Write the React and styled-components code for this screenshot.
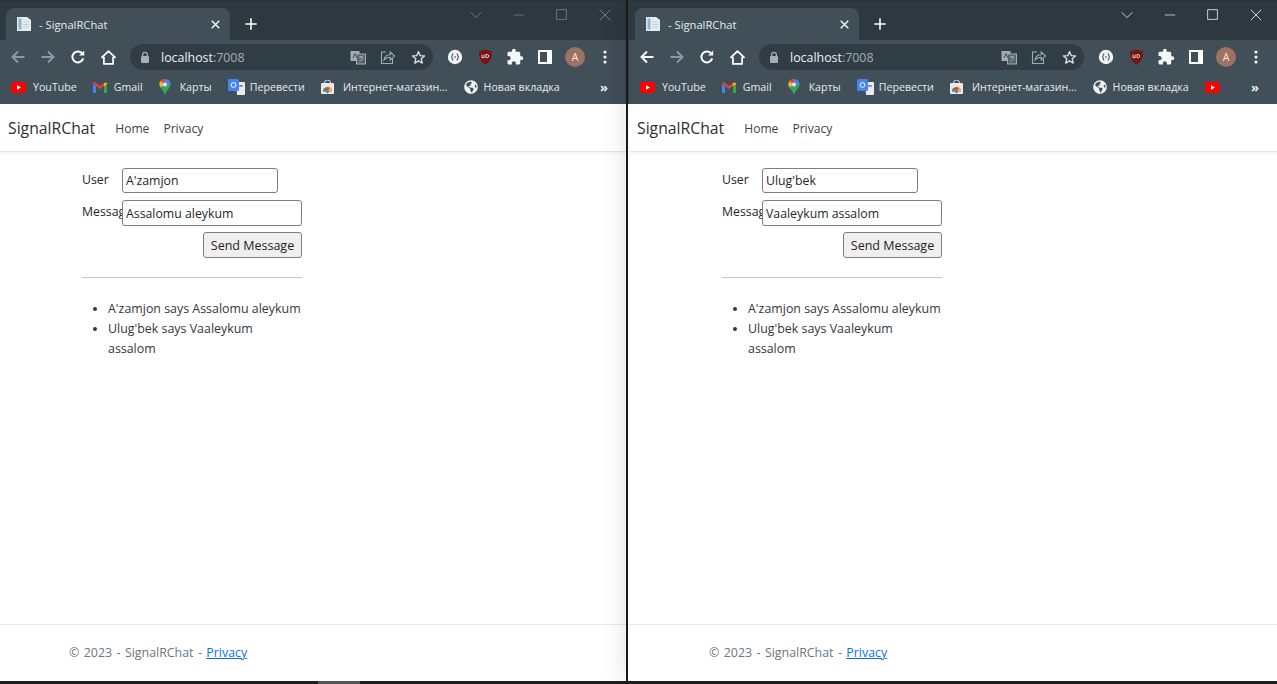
import React from "react";
import styled, { createGlobalStyle } from "styled-components";
import { FaGlobeAmericas } from "react-icons/fa";
import { MdExtension } from "react-icons/md";

const Global = createGlobalStyle`
  html, body { margin: 0; padding: 0; background: #211d1f; overflow: hidden; }
  * { box-sizing: border-box; }
`;

const Screen = styled.div`
  width: 1277px;
  height: 684px;
  display: flex;
  flex-direction: column;
  background: #211d1f;
`;
const Windows = styled.div`
  height: 681px;
  display: flex;
`;
const BottomStrip = styled.div`
  flex: 1;
  padding-left: 318px;
`;
const TaskbarPatch = styled.div`
  width: 42px;
  height: 3px;
  background: #55524f;
`;
const Divider = styled.div`
  width: 2px;
  background: #1c1719;
  position: relative;
  z-index: 2;
`;
const Win = styled.div`
  flex: 0 0 ${(p) => p.$width}px;
  width: ${(p) => p.$width}px;
  display: flex;
  flex-direction: column;
  background: #fff;
  padding-left: ${(p) => p.$inset}px;
  position: relative;
  z-index: ${(p) => (p.$active ? 1 : 0)};
  box-shadow: ${(p) => (p.$active ? "-10px 0 18px rgba(0,0,0,.07)" : "none")};
`;
const ChromeFrame = styled.div`
  background: #2e3a40;
  margin-left: ${(p) => -p.$inset}px;
  padding-left: ${(p) => p.$inset}px;
`;
const TabStrip = styled.div`
  height: 40px;
  display: flex;
  padding-left: 6px;
  background: #2d393f;
  border-top: 1px solid #283338;
`;
const Tab = styled.div`
  margin-top: 7px;
  width: 224px;
  height: 32px;
  background: #414f59;
  border-radius: 8px 8px 0 0;
  display: flex;
  align-items: center;
  padding: 0 8px 0 10px;
  color: #e6eaec;
  font: 11.2px "Open Sans", "Liberation Sans", sans-serif;
`;
const TabTitle = styled.span`
  flex: 1;
  margin-left: 7px;
  white-space: nowrap;
`;
const TabClose = styled.span`
  width: 16px;
  height: 16px;
  display: flex;
  align-items: center;
  justify-content: center;
  margin-right: -1px;
`;
const NewTab = styled.div`
  width: 42px;
  margin-top: 7px;
  height: 32px;
  display: flex;
  align-items: center;
  justify-content: center;
`;
const WinControls = styled.div`
  margin-left: auto;
  display: flex;
  height: 27px;
`;
const ControlSlot = styled.div`
  width: 43px;
  display: flex;
  align-items: center;
  justify-content: center;
`;
const Toolbar = styled.div`
  height: 34px;
  background: #414f59;
  display: flex;
  align-items: center;
  padding: 0 6px 0 3px;
`;
const Slot = styled.div`
  width: 30px;
  height: 26px;
  display: flex;
  align-items: center;
  justify-content: center;
  flex: none;
`;
const Omnibox = styled.div`
  flex: 1;
  height: 26px;
  margin: 0 7px;
  border-radius: 13px;
  background: #303d45;
  display: flex;
  align-items: center;
  padding-left: 9px;
  font: 12.4px "Open Sans", "Liberation Sans", sans-serif;
`;
const Host = styled.span`
  margin-left: 10px;
  color: #eef1f2;
  flex: 1;
`;
const Port = styled.span`
  color: #a5adb2;
`;
const Avatar = styled.div`
  width: 20px;
  height: 20px;
  border-radius: 50%;
  background: #9c7262;
  color: #f3e9e4;
  font: 10.5px "Open Sans", sans-serif;
  display: flex;
  align-items: center;
  justify-content: center;
`;
const BookmarkBar = styled.div`
  height: 30px;
  background: #414f59;
  display: flex;
  align-items: center;
  padding: 0 18px 4px 11px;
  gap: 16px;
  color: #e6eaec;
  font: 10.65px "Open Sans", "Liberation Sans", sans-serif;
`;
const Bookmark = styled.div`
  display: flex;
  align-items: center;
  gap: ${(p) => p.$gap ?? 7}px;
  white-space: nowrap;
`;
const More = styled.div`
  margin-left: auto;
  color: #e8ecee;
  font-size: 13px;
  line-height: 14px;
  font-weight: 700;
`;
const Page = styled.div`
  flex: 1;
  display: flex;
  flex-direction: column;
  background: #fff;
  font: 12.3px/19.8px "Open Sans", "Liberation Sans", sans-serif;
  color: #212529;
`;
const Nav = styled.nav`
  height: 48px;
  flex: none;
  display: flex;
  align-items: center;
  padding: 2px 0 0 8px;
  border-bottom: 1px solid #e5e5e5;
  box-shadow: 0 2px 3px rgba(0, 0, 0, 0.05);
`;
const Brand = styled.span`
  font-size: 15.75px;
  color: #2b2f33;
  margin-right: 20px;
`;
const NavLink = styled.span`
  font-size: 12.1px;
  margin-right: 14px;
  color: #3c3f43;
`;
const Container = styled.div`
  width: 488px;
  margin: 0 auto;
`;
const Main = styled(Container)`
  flex: 1;
  padding: 16px 0 0 13px;
`;
const Column = styled.div`
  width: 220px;
`;
const FormRow = styled.div`
  display: flex;
  height: ${(p) => p.$h}px;
  align-items: flex-start;
`;
const Label = styled.label`
  width: 40px;
  flex: none;
  overflow: hidden;
  white-space: nowrap;
  margin-top: 2px;
`;
const Input = styled.input`
  width: ${(p) => p.$w}px;
  height: ${(p) => p.$h}px;
  border: 1px solid #7e7e7e;
  border-radius: 3px;
  padding: 0 3px;
  background: #fff;
  color: #1f1f1f;
  font: 12.3px "Open Sans", "Liberation Sans", sans-serif;
  outline: none;
`;
const ButtonRow = styled.div`
  display: flex;
  justify-content: flex-end;
`;
const SendButton = styled.button`
  width: 99px;
  height: 26px;
  background: #efefef;
  border: 1px solid #7e7e7e;
  border-radius: 3px;
  padding: 0;
  color: #1f1f1f;
  font: 12.5px "Open Sans", "Liberation Sans", sans-serif;
`;
const Rule = styled.hr`
  margin: 19px 0 21px;
  border: 0;
  border-top: 1px solid #c9c9c9;
`;
const Messages = styled.ul`
  margin: 0;
  padding-left: 26px;
  font-size: 12.42px;
`;
const MessageItem = styled.li`
  white-space: nowrap;
  color: #33373b;
`;
const Footer = styled.footer`
  height: 57px;
  flex: none;
  border-top: 1px solid #eaeaea;
  color: #6c757d;
  display: flex;
  align-items: center;
  font-size: 12.4px;
  word-spacing: 1.2px;
`;
const FooterLink = styled.a`
  color: #0d6efd;
  text-decoration: underline;
`;

const Line = ({ size = 16, color = "#fff", w = 2, children, fill = "none" }) => (
  <svg width={size} height={size} viewBox="0 0 16 16" fill={fill} stroke={color} strokeWidth={w}>
    {children}
  </svg>
);

const Back = ({ color }) => (
  <Line color={color}><path d="M14.5 8H2.5M8 2.5 2.5 8 8 13.5" /></Line>
);
const Forward = ({ color }) => (
  <Line color={color}><path d="M1.5 8h12M8 2.5 13.5 8 8 13.5" /></Line>
);
const Reload = () => (
  <Line><path d="M13.2 9.4a5.5 5.5 0 1 1-1.2-5.2" /><path d="M14.2 1.4v5.2H9z" fill="#fff" stroke="none" /></Line>
);
const HomeIcon = () => (
  <Line size={17} w={1.6}><path d="M8 2 1.8 7.8h1.9v6.2h8.6V7.8h1.9z" strokeLinejoin="round" /></Line>
);
const Lock = () => (
  <svg width="12" height="13" viewBox="0 0 12 13">
    <path d="M3.6 5V3.7a2.4 2.4 0 0 1 4.8 0V5" fill="none" stroke="#a6aeb3" strokeWidth="1.3" />
    <rect x="2" y="5" width="8" height="7" rx="1" fill="#a6aeb3" />
  </svg>
);
const Translate = () => (
  <svg width="16" height="15" viewBox="0 0 16 15">
    <rect x="0.5" y="1" width="9" height="10" fill="#a3abb0" />
    <rect x="6.5" y="4" width="9" height="10" fill="#59666e" stroke="#a3abb0" />
    <path d="M3 8 5 3.5 7 8" fill="none" stroke="#414f59" />
    <path d="M9 7h4M11 6v1.5M9.5 11c2-1 3-2 3-3.5" fill="none" stroke="#c6ccd0" strokeWidth=".8" />
  </svg>
);
const Share = () => (
  <svg width="16" height="15" viewBox="0 0 16 15" fill="none" stroke="#a3abb0" strokeWidth="1.1">
    <path d="M6 2H1.5v11.5h11V9" />
    <path d="M4 10c.4-3.4 3-5.2 6.2-5.2V2l4.4 4-4.4 4V7.2C7.8 7.200 5.600 8 4 10z" />
  </svg>
);
const Star = () => (
  <svg width="15" height="15" viewBox="0 0 16 16" fill="none" stroke="#d7dcdf" strokeWidth="1.5">
    <path d="M8 1.800 9.800 6l4.600.4-3.500 3 1.100 4.500L8 11.500l-4 2.400 1.100-4.500-3.500-3L6.200 6z" strokeLinejoin="round" />
  </svg>
);
const ExtCircle = () => (
  <svg width="16" height="16" viewBox="0 0 16 16">
    <circle cx="8" cy="8" r="7.200" fill="#f2f3f3" />
    <path d="M6 4.500 4.600 8 6 11.500M10 4.500 11.400 8 10 11.500" fill="none" stroke="#555" strokeWidth="1.100" />
    <circle cx="8" cy="8" r=".9" fill="#777" />
  </svg>
);
const UBlock = () => (
  <svg width="15" height="16" viewBox="0 0 15 16">
    <path d="M7.500.6 14 2.400c0 6-1.500 10.400-6.500 13C2.500 12.800 1 8.400 1 2.400z" fill="#7c1213" />
    <path d="M4 5.500v3.200h2.200V5.500M8 5.500v3.200h1.500c1.500 0 1.500-3.200 0-3.200z" fill="none" stroke="#eed" strokeWidth=".9" />
  </svg>
);
const SidePanel = () => (
  <svg width="14" height="14" viewBox="0 0 14 14">
    <rect x="1" y="1" width="12" height="12" fill="#414f59" stroke="#fff" strokeWidth="2" />
    <rect x="9" y="1" width="4" height="12" fill="#fff" />
  </svg>
);
const Dots = () => (
  <svg width="4" height="14" viewBox="0 0 4 14" fill="#f0f2f3">
    <circle cx="2" cy="2" r="1.600" /><circle cx="2" cy="7" r="1.600" /><circle cx="2" cy="12" r="1.600" />
  </svg>
);
const Doc = () => (
  <svg width="16" height="16" viewBox="0 0 16 16">
    <path d="M1 1h10l4 3v11H1z" fill="#e4ecef" />
    <rect x="2.500" y="2.500" width="3" height="11" fill="#8fb2cf" />
    <path d="M7 6h6M7 8.500h6M7 11h6" stroke="#c3cdd2" />
  </svg>
);
const Youtube = () => (
  <svg width="15" height="11" viewBox="0 0 15 11">
    <rect width="15" height="11" rx="2.500" fill="#f00" />
    <path d="M6 3.200v4.600L10 5.500z" fill="#fff" />
  </svg>
);
const Gmail = () => (
  <svg width="14" height="11" viewBox="0 0 14 11">
    <path d="M0 2v9h3V4.500z" fill="#4285f4" />
    <path d="M14 2v9h-3V4.500z" fill="#34a853" />
    <path d="M0 1.500 7 7l7-5.500V.8L12 .2 7 4 2 .2 0 .8z" fill="#ea4335" />
    <path d="M11 1v3.500L14 2V1z" fill="#fbbc04" />
  </svg>
);
const Maps = () => (
  <svg width="12" height="16" viewBox="0 0 12 16">
    <path d="M6 0a5.500 5.500 0 0 1 5.500 5.500C11.500 9 7.500 11 6 16 4.500 11 .5 9 .5 5.500A5.500 5.500 0 0 1 6 0z" fill="#34a853" />
    <path d="M6 0a5.500 5.500 0 0 1 5.500 5.500L1.800 9 .5 5.500A5.500 5.500 0 0 1 6 0z" fill="#4285f4" />
    <path d="M1.500 2 6 5.500 1.200 8.200C.2 6 .2 3.800 1.500 2z" fill="#fbbc04" />
    <path d="M1.500 2A5.500 5.500 0 0 1 6 0l1.500.2L4 4z" fill="#ea4335" />
    <circle cx="6" cy="5.500" r="2" fill="#fdd" />
  </svg>
);
const TranslateMark = () => (
  <svg width="17" height="16" viewBox="0 0 17 16">
    <path d="M8 3h8a1 1 0 0 1 1 1v11a1 1 0 0 1-1 1H9z" fill="#e8eaed" />
    <rect x="0" y="0" width="11" height="12" rx="1.500" fill="#4285f4" />
    <circle cx="5.500" cy="6" r="2.400" fill="none" stroke="#fff" strokeWidth="1" />
    <path d="M11 7h4M13 6v1.500" stroke="#555" strokeWidth=".9" />
  </svg>
);
const Store = () => (
  <svg width="13" height="14" viewBox="0 0 13 14">
    <path d="M3.500 3a3 3 0 0 1 6 0" fill="none" stroke="#dfe3e6" />
    <rect y="3" width="13" height="11" rx="1" fill="#e8eaed" />
    <path d="M2 11.500a4.500 4.500 0 0 1 9 0z" fill="#ea4335" />
    <path d="M2 11.500a4.500 4.500 0 0 1 2-3.700l2.500 3.700z" fill="#34a853" />
    <path d="M11 11.500a4.500 4.500 0 0 0-2-3.700l-2.500 3.700z" fill="#fbbc04" />
    <circle cx="6.500" cy="11.500" r="1.700" fill="#4285f4" />
  </svg>
);

const Chrome = ({ active, inset, extraYoutube }) => {
  const ctl = active ? "#e6eaec" : "#76828a";
  return (
    <ChromeFrame $inset={inset}>
      <TabStrip>
        <Tab>
          <Doc />
          <TabTitle>- SignalRChat</TabTitle>
          <TabClose>
            <Line size={11} w={2.200} color="#eef1f2"><path d="M2.500 2.500l11 11M13.500 2.500l-11 11" /></Line>
          </TabClose>
        </Tab>
        <NewTab>
          <Line size={14} w={1.800}><path d="M8 1.500v13M1.500 8h13" /></Line>
        </NewTab>
        <WinControls>
          <ControlSlot>
            <Line size={14} w={1} color={ctl}><path d="M2 5l6 6 6-6" /></Line>
          </ControlSlot>
          <ControlSlot>
            <Line size={12} w={1} color={ctl}><path d="M1 8h14" /></Line>
          </ControlSlot>
          <ControlSlot>
            <Line size={11} w={1.200} color={ctl}><rect x="1" y="1" width="14" height="14" /></Line>
          </ControlSlot>
          <ControlSlot>
            <Line size={12} w={1.200} color={ctl}><path d="M1 1l14 14M15 1 1 15" /></Line>
          </ControlSlot>
        </WinControls>
      </TabStrip>
      <Toolbar>
        <Slot><Back color={active ? "#f4f6f7" : "#8d989f"} /></Slot>
        <Slot><Forward color="#8d989f" /></Slot>
        <Slot><Reload /></Slot>
        <Slot><HomeIcon /></Slot>
        <Omnibox>
          <Lock />
          <Host>localhost<Port>:7008</Port></Host>
          <Slot><Translate /></Slot>
          <Slot><Share /></Slot>
          <Slot><Star /></Slot>
        </Omnibox>
        <Slot><ExtCircle /></Slot>
        <Slot><UBlock /></Slot>
        <Slot><MdExtension size={18} color="#f5f6f7" /></Slot>
        <Slot><SidePanel /></Slot>
        <Slot><Avatar>A</Avatar></Slot>
        <Slot><Dots /></Slot>
      </Toolbar>
      <BookmarkBar>
        <Bookmark><Youtube />YouTube</Bookmark>
        <Bookmark><Gmail />Gmail</Bookmark>
        <Bookmark $gap={9}><Maps />Карты</Bookmark>
        <Bookmark $gap={5}><TranslateMark />Перевести</Bookmark>
        <Bookmark $gap={9}><Store />Интернет-магазин...</Bookmark>
        <Bookmark $gap={6}><FaGlobeAmericas size={14} color="#f0f2f3" />Новая вкладка</Bookmark>
        {extraYoutube && <Bookmark><Youtube /></Bookmark>}
        <More>»</More>
      </BookmarkBar>
    </ChromeFrame>
  );
};

const BrowserWindow = ({ width, inset = 0, active, user, draft, extraYoutube }) => (
  <Win $width={width} $inset={inset} $active={active}>
    <Chrome active={active} inset={inset} extraYoutube={extraYoutube} />
    <Page>
      <Nav>
        <Brand>SignalRChat</Brand>
        <NavLink>Home</NavLink>
        <NavLink>Privacy</NavLink>
      </Nav>
      <Main>
        <Column>
          <FormRow $h={32}>
            <Label>User</Label>
            <Input $w={156} $h={25} defaultValue={user} />
          </FormRow>
          <FormRow $h={32}>
            <Label>Message</Label>
            <Input $w={180} $h={26} defaultValue={draft} />
          </FormRow>
          <ButtonRow><SendButton>Send Message</SendButton></ButtonRow>
          <Rule />
          <Messages>
            <MessageItem>A'zamjon says Assalomu aleykum</MessageItem>
            <MessageItem>Ulug'bek says Vaaleykum<br />assalom</MessageItem>
          </Messages>
        </Column>
      </Main>
      <Footer>
        <Container>
          © 2023 - SignalRChat - <FooterLink>Privacy</FooterLink>
        </Container>
      </Footer>
    </Page>
  </Win>
);

export default function App() {
  return (
    <Screen>
      <Global />
      <Windows>
        <BrowserWindow width={626} user="A'zamjon" draft="Assalomu aleykum" />
        <Divider />
        <BrowserWindow width={649} inset={1} active user="Ulug'bek" draft="Vaaleykum assalom" extraYoutube />
      </Windows>
      <BottomStrip><TaskbarPatch /></BottomStrip>
    </Screen>
  );
}
